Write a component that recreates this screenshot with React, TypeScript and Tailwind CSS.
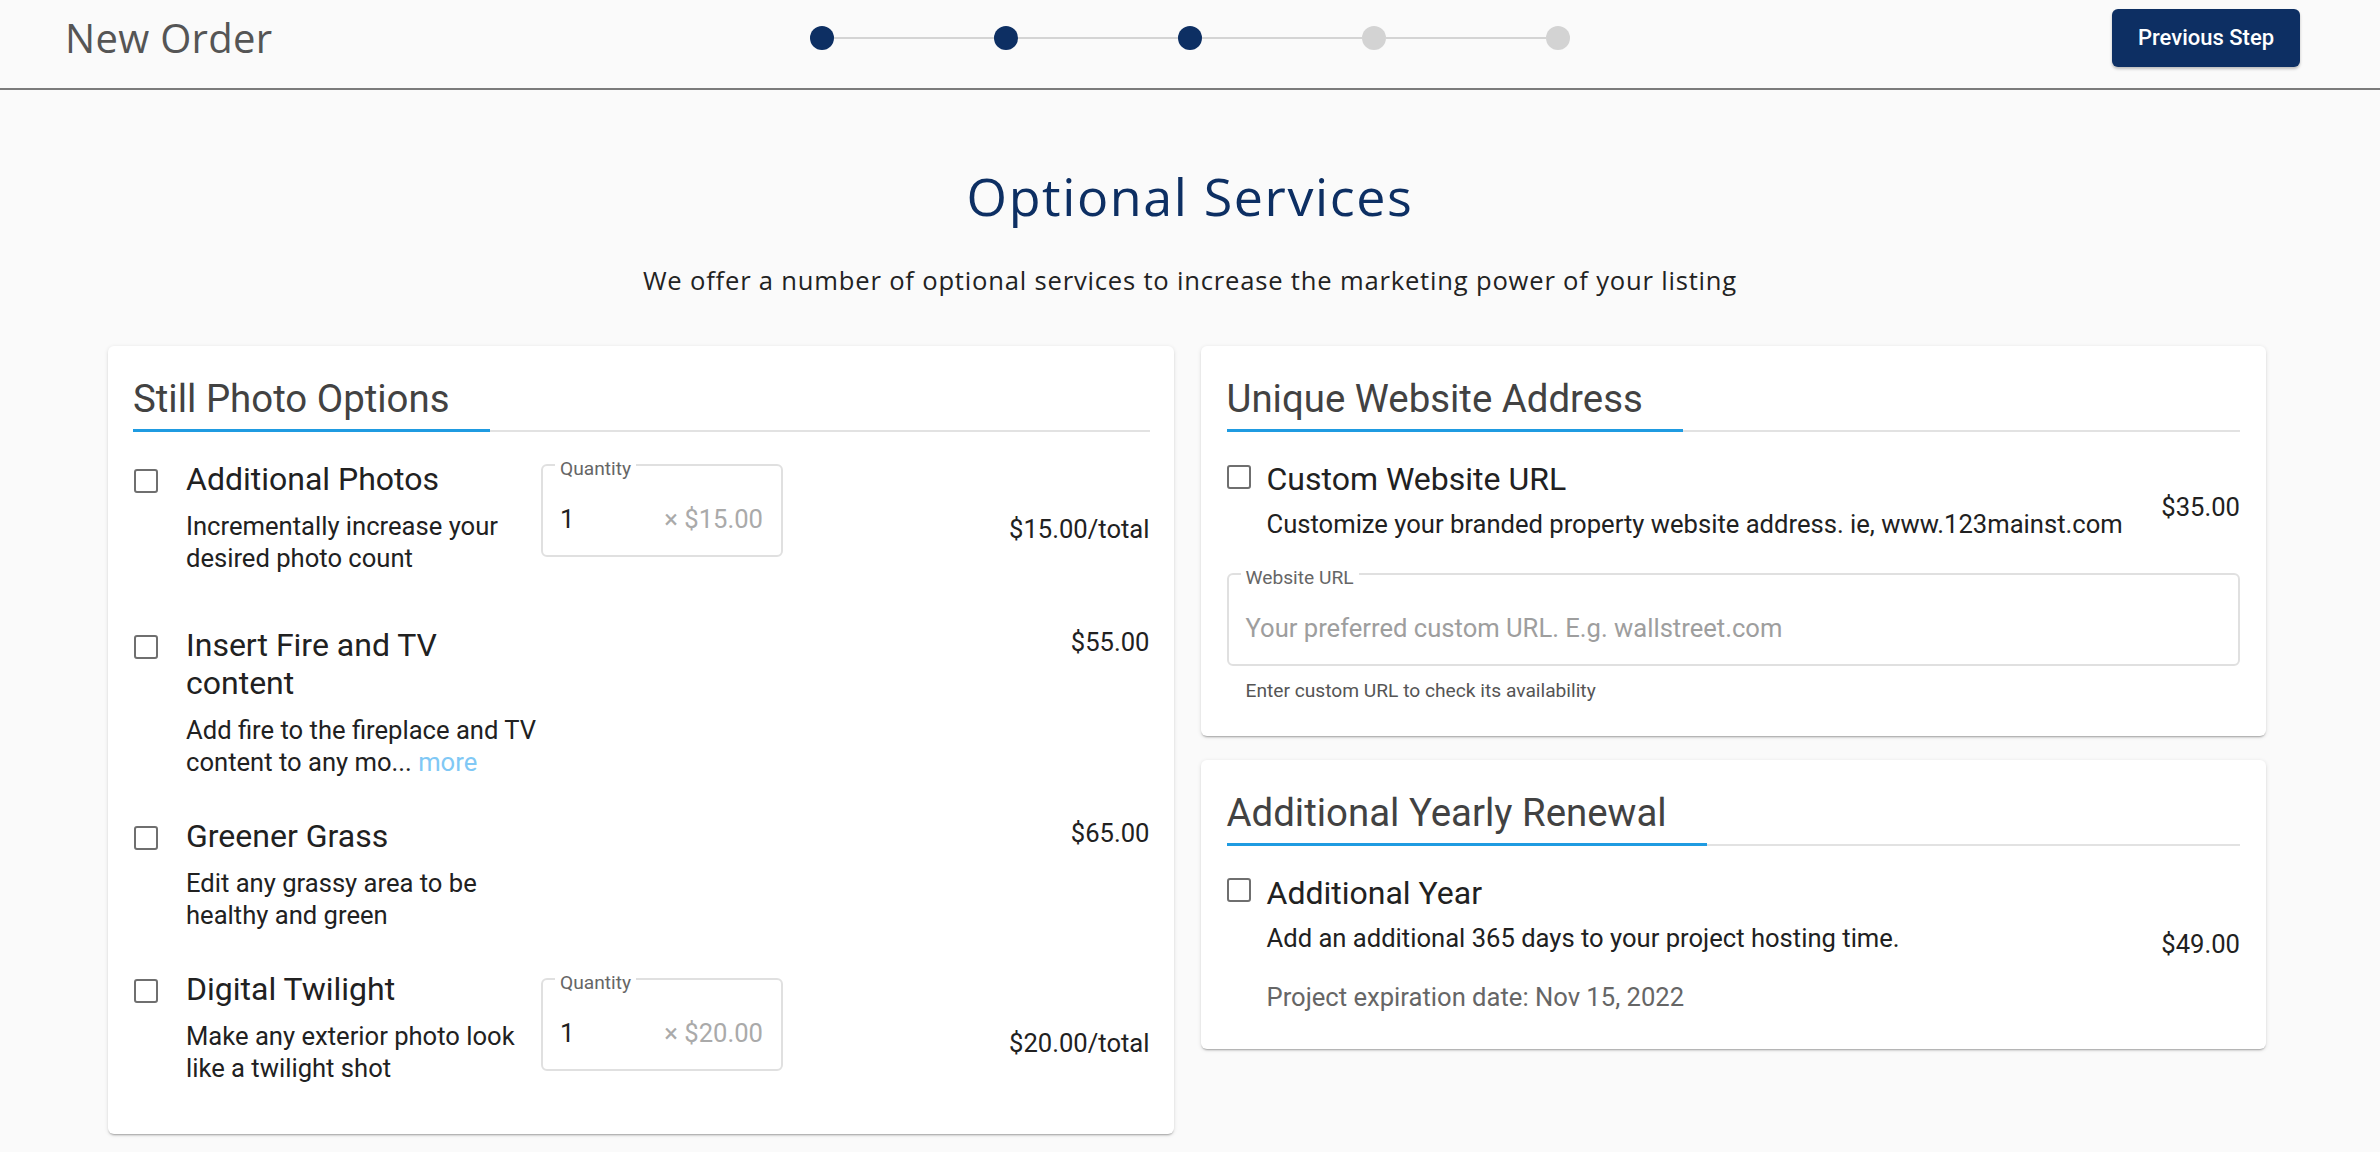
import { ReactNode } from 'react';

const navy = 'bg-[#0d2f63]';

type PhotoItem = {
  title: string[];
  desc: ReactNode[];
  qty?: string;
  price: string;
  rowCls: string;
  boxCls?: string;
  priceCls: string;
};

const photoItems: PhotoItem[] = [
  {
    title: ['Additional Photos'],
    desc: ['Incrementally increase your', 'desired photo count'],
    qty: '× $15.00',
    price: '$15.00/total',
    rowCls: 'min-h-[127px]',
    boxCls: 'mt-[4px]',
    priceCls: 'mt-[53px]',
  },
  {
    title: ['Insert Fire and TV', 'content'],
    desc: [
      'Add fire to the fireplace and TV',
      <>content to any mo... <span className="text-[#80c8f5] cursor-pointer">more</span></>,
    ],
    price: '$55.00',
    rowCls: '',
    priceCls: 'mt-0',
  },
  {
    title: ['Greener Grass'],
    desc: ['Edit any grassy area to be', 'healthy and green'],
    price: '$65.00',
    rowCls: '',
    priceCls: 'mt-0',
  },
  {
    title: ['Digital Twilight'],
    desc: ['Make any exterior photo look', 'like a twilight shot'],
    qty: '× $20.00',
    price: '$20.00/total',
    rowCls: 'min-h-[127px]',
    boxCls: 'mt-[8px]',
    priceCls: 'mt-[57px]',
  },
];

function Checkbox({ className = '' }: { className?: string }) {
  return <div className={`w-6 h-6 shrink-0 rounded-[3px] border-2 border-[#6f6f6f] bg-white ${className}`} />;
}

function CardTitle({ children }: { children: ReactNode }) {
  return (
    <div className="border-b-2 border-[#e2e2e2]">
      <h2 className="inline-block pr-10 pb-[9px] -mb-[2px] border-b-[3px] border-[#1f9be1] text-[38.4px] leading-[43px] text-[#424242] font-normal">
        {children}
      </h2>
    </div>
  );
}

function Outlined({ label, className = '', children }: { label: string; className?: string; children: ReactNode }) {
  return (
    <div className={`relative h-[93px] rounded-[6px] border-2 border-[#e0e0e0] flex items-center pt-4 pl-[17px] pr-[18px] ${className}`}>
      <span className="absolute -top-[7px] left-[12px] bg-white px-[5px] text-[19.2px] leading-[20px] text-[#666]">{label}</span>
      {children}
    </div>
  );
}

function Card({ children, className = '' }: { children: ReactNode; className?: string }) {
  return (
    <div className={`bg-white rounded-[6px] shadow-[0_2px_2px_-1px_rgba(0,0,0,0.3),0_1px_4px_0_rgba(0,0,0,0.12)] ${className}`}>
      {children}
    </div>
  );
}

export default function App() {
  return (
    <div className="min-h-screen bg-[#fafafa] font-['Roboto',sans-serif] text-[#212121]">
      <header className="h-[90px] border-b-2 border-[#7b7b7b] pb-[13px] grid grid-cols-[1fr_auto_1fr] items-center">
        <div className="pl-[65px] font-['Open_Sans',sans-serif] text-[40px] tracking-[0.3px] leading-none text-[#555]">New Order</div>
        <div className="flex items-center">
          {[true, true, true, false, false].map((done, i) => (
            <div key={i} className="flex items-center">
              {i > 0 && <div className="w-[160px] h-[2px] bg-[#d4d4d4]" />}
              <div className={`w-6 h-6 rounded-full ${done ? navy : 'bg-[#d3d3d3]'}`} />
            </div>
          ))}
        </div>
        <div className="flex justify-end pr-[80px]">
          <button className={`w-[188px] h-[58px] rounded-[6px] ${navy} text-white text-[22px] font-medium shadow-[0_2px_3px_rgba(0,0,0,0.25)]`}>
            Previous Step
          </button>
        </div>
      </header>

      <div className="pt-[80px] text-center font-['Open_Sans',sans-serif]">
        <h1 className="text-[52px] leading-[52px] tracking-[1.6px] text-[#0d2f63]">Optional Services</h1>
        <p className="mt-[43px] text-[25.6px] leading-[32px] tracking-[0.8px] text-[#222]">
          We offer a number of optional services to increase the marketing power of your listing
        </p>
      </div>

      <div className="ml-[108px] w-[2158px] mt-[49px] grid grid-cols-2 gap-[27px] items-start">
        <Card className="pt-[31px] pl-[25px] pr-[24px] pb-[37px]">
          <CardTitle>Still Photo Options</CardTitle>
          <div className="mt-[28px] flex flex-col gap-[39px]">
            {photoItems.map((it, i) => (
              <div key={i} className={`flex items-start ${it.rowCls}`}>
                <Checkbox className="mt-[9px] ml-[1px]" />
                <div className="ml-[28px] w-[355px] shrink-0">
                  <div className="text-[32px] leading-[38px]">
                    {it.title.map((t, j) => <div key={j} className="whitespace-nowrap">{t}</div>)}
                  </div>
                  <div className="mt-3 text-[25.6px] leading-[32px]">
                    {it.desc.map((d, j) => <div key={j} className="whitespace-nowrap">{d}</div>)}
                  </div>
                </div>
                {it.qty && (
                  <Outlined label="Quantity" className={`w-[242px] justify-between ${it.boxCls}`}>
                    <span className="text-[25.6px] leading-[32px]">1</span>
                    <span className="text-[25.6px] leading-[32px] text-[#aaa]">{it.qty}</span>
                  </Outlined>
                )}
                <div className={`ml-auto text-[25.6px] leading-[32px] ${it.priceCls}`}>{it.price}</div>
              </div>
            ))}
          </div>
        </Card>

        <div className="flex flex-col gap-[24px]">
          <Card className="pt-[31px] pl-[26px] pr-[26px] pb-[33px]">
            <CardTitle>Unique Website Address</CardTitle>
            <div className="mt-[28px] flex items-start">
              <Checkbox className="mt-[5px]" />
              <div className="ml-4">
                <div className="text-[32px] leading-[38px]">Custom Website URL</div>
                <div className="mt-[10px] text-[25.6px] leading-[32px]">
                  Customize your branded property website address. ie, www.123mainst.com
                </div>
              </div>
              <div className="ml-auto mt-[31px] text-[25.6px] leading-[32px]">$35.00</div>
            </div>
            <Outlined label="Website URL" className="mt-[33px]">
              <span className="text-[25.6px] leading-[32px] text-[#9e9e9e]">Your preferred custom URL. E.g. wallstreet.com</span>
            </Outlined>
            <div className="mt-[13px] pl-[19px] text-[19.2px] leading-[24px] text-[#555]">Enter custom URL to check its availability</div>
          </Card>

          <Card className="pt-[31px] pl-[26px] pr-[26px] pb-[36px]">
            <CardTitle>Additional Yearly Renewal</CardTitle>
            <div className="mt-[28px] flex items-center">
              <div className="flex items-start self-stretch">
                <Checkbox className="mt-[4px]" />
                <div className="ml-4">
                  <div className="text-[32px] leading-[38px]">Additional Year</div>
                  <div className="mt-[10px] text-[25.6px] leading-[32px]">Add an additional 365 days to your project hosting time.</div>
                  <div className="mt-[27px] text-[25.6px] leading-[32px] text-[#666]">Project expiration date: Nov 15, 2022</div>
                </div>
              </div>
              <div className="ml-auto text-[25.6px] leading-[32px]">$49.00</div>
            </div>
          </Card>
        </div>
      </div>
    </div>
  );
}
